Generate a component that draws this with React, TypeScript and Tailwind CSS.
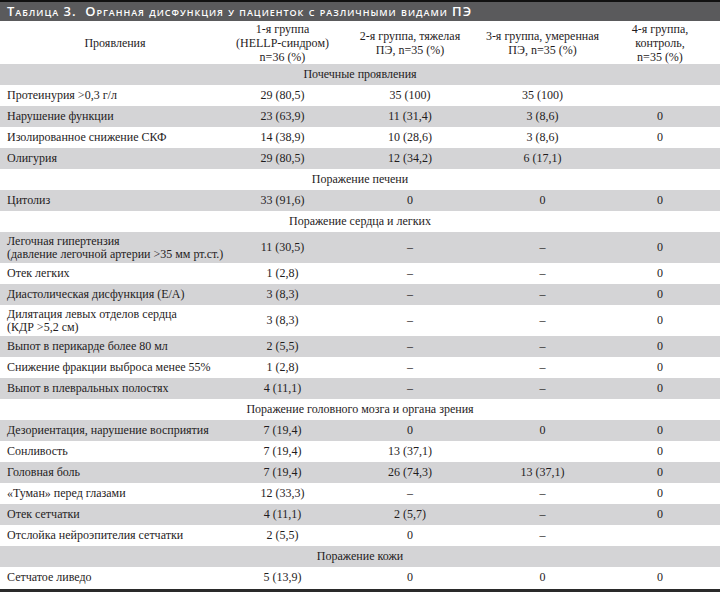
type Row =
  | { kind: 'section'; title: string }
  | { kind: 'data'; label: string[]; cells: string[] };

const D = '–';

const rows: Row[] = [
  { kind: 'section', title: 'Почечные проявления' },
  { kind: 'data', label: ['Протеинурия >0,3 г/л'], cells: ['29 (80,5)', '35 (100)', '35 (100)', ''] },
  { kind: 'data', label: ['Нарушение функции'], cells: ['23 (63,9)', '11 (31,4)', '3 (8,6)', '0'] },
  { kind: 'data', label: ['Изолированное снижение СКФ'], cells: ['14 (38,9)', '10 (28,6)', '3 (8,6)', '0'] },
  { kind: 'data', label: ['Олигурия'], cells: ['29 (80,5)', '12 (34,2)', '6 (17,1)', ''] },
  { kind: 'section', title: 'Поражение печени' },
  { kind: 'data', label: ['Цитолиз'], cells: ['33 (91,6)', '0', '0', '0'] },
  { kind: 'section', title: 'Поражение сердца и легких' },
  {
    kind: 'data',
    label: ['Легочная гипертензия', '(давление легочной артерии >35 мм рт.ст.)'],
    cells: ['11 (30,5)', D, D, '0'],
  },
  { kind: 'data', label: ['Отек легких'], cells: ['1 (2,8)', D, D, '0'] },
  { kind: 'data', label: ['Диастолическая дисфункция (Е/А)'], cells: ['3 (8,3)', D, D, '0'] },
  {
    kind: 'data',
    label: ['Дилятация левых отделов сердца', '(КДР >5,2 см)'],
    cells: ['3 (8,3)', D, D, '0'],
  },
  { kind: 'data', label: ['Выпот в перикарде более 80 мл'], cells: ['2 (5,5)', D, D, '0'] },
  { kind: 'data', label: ['Снижение фракции выброса менее 55%'], cells: ['1 (2,8)', D, D, '0'] },
  { kind: 'data', label: ['Выпот в плевральных полостях'], cells: ['4 (11,1)', D, D, '0'] },
  { kind: 'section', title: 'Поражение головного мозга и органа зрения' },
  { kind: 'data', label: ['Дезориентация, нарушение восприятия'], cells: ['7 (19,4)', '0', '0', '0'] },
  { kind: 'data', label: ['Сонливость'], cells: ['7 (19,4)', '13 (37,1)', '', '0'] },
  { kind: 'data', label: ['Головная боль'], cells: ['7 (19,4)', '26 (74,3)', '13 (37,1)', '0'] },
  { kind: 'data', label: ['«Туман» перед глазами'], cells: ['12 (33,3)', D, D, '0'] },
  { kind: 'data', label: ['Отек сетчатки'], cells: ['4 (11,1)', '2 (5,7)', D, '0'] },
  { kind: 'data', label: ['Отслойка нейроэпителия сетчатки'], cells: ['2 (5,5)', '0', D, ''] },
  { kind: 'section', title: 'Поражение кожи' },
  { kind: 'data', label: ['Сетчатое ливедо'], cells: ['5 (13,9)', '0', '0', '0'] },
];

export default function App() {
  return (
    <div className="w-[720px] h-[599px] bg-white text-[#1f1c1d] font-['Liberation_Serif',serif] text-[12px] leading-[13px]">
      {/* Title bar */}
      <div className="h-[21px] border-t-2 border-[#111] bg-[#5a5a5c] px-[7px] flex items-center text-white font-['Open_Sans',sans-serif] font-semibold text-[13px] tracking-[0.075em] [font-variant:small-caps]">
        Таблица 3.&nbsp; Органная дисфункция у пациенток с различными видами ПЭ
      </div>

      <table className="w-full table-fixed border-collapse">
        <colgroup>
          <col className="w-[230px]" />
          <col className="w-[105px]" />
          <col className="w-[150px]" />
          <col className="w-[115px]" />
          <col className="w-[120px]" />
        </colgroup>
        <thead>
          <tr className="h-[43px] leading-[14px]">
            <th className="font-normal text-center align-middle">Проявления</th>
            <th className="font-normal text-center align-middle">
              1-я группа
              <br />
              (HELLP-синдром)
              <br />
              n=36 (%)
            </th>
            <th className="font-normal text-center align-middle">
              2-я группа, тяжелая
              <br />
              ПЭ, n=35 (%)
            </th>
            <th className="font-normal text-center align-middle">
              3-я группа, умеренная
              <br />
              ПЭ, n=35 (%)
            </th>
            <th className="font-normal text-center align-middle">
              4-я группа,
              <br />
              контроль,
              <br />
              n=35 (%)
            </th>
          </tr>
        </thead>
        <tbody>
          {rows.map((r, i) => {
            const bg = i % 2 === 0 ? 'bg-[#d4d4d6]' : 'bg-white';
            if (r.kind === 'section') {
              return (
                <tr key={i} className={`h-[21px] ${bg}`}>
                  <td colSpan={5} className="text-center align-middle">
                    {r.title}
                  </td>
                </tr>
              );
            }
            const tall = r.label.length > 1;
            return (
              <tr key={i} className={`${tall ? 'h-[31px]' : 'h-[21px]'} ${bg}`}>
                <td className="pl-[7px] align-middle">
                  {r.label.map((l, j) => (
                    <div key={j}>{l}</div>
                  ))}
                </td>
                {r.cells.map((c, j) => (
                  <td key={j} className="text-center align-middle">
                    {c}
                  </td>
                ))}
              </tr>
            );
          })}
        </tbody>
      </table>
      <div className="h-[3px] bg-[#2a2a2a] mt-[1px]" />
    </div>
  );
}
